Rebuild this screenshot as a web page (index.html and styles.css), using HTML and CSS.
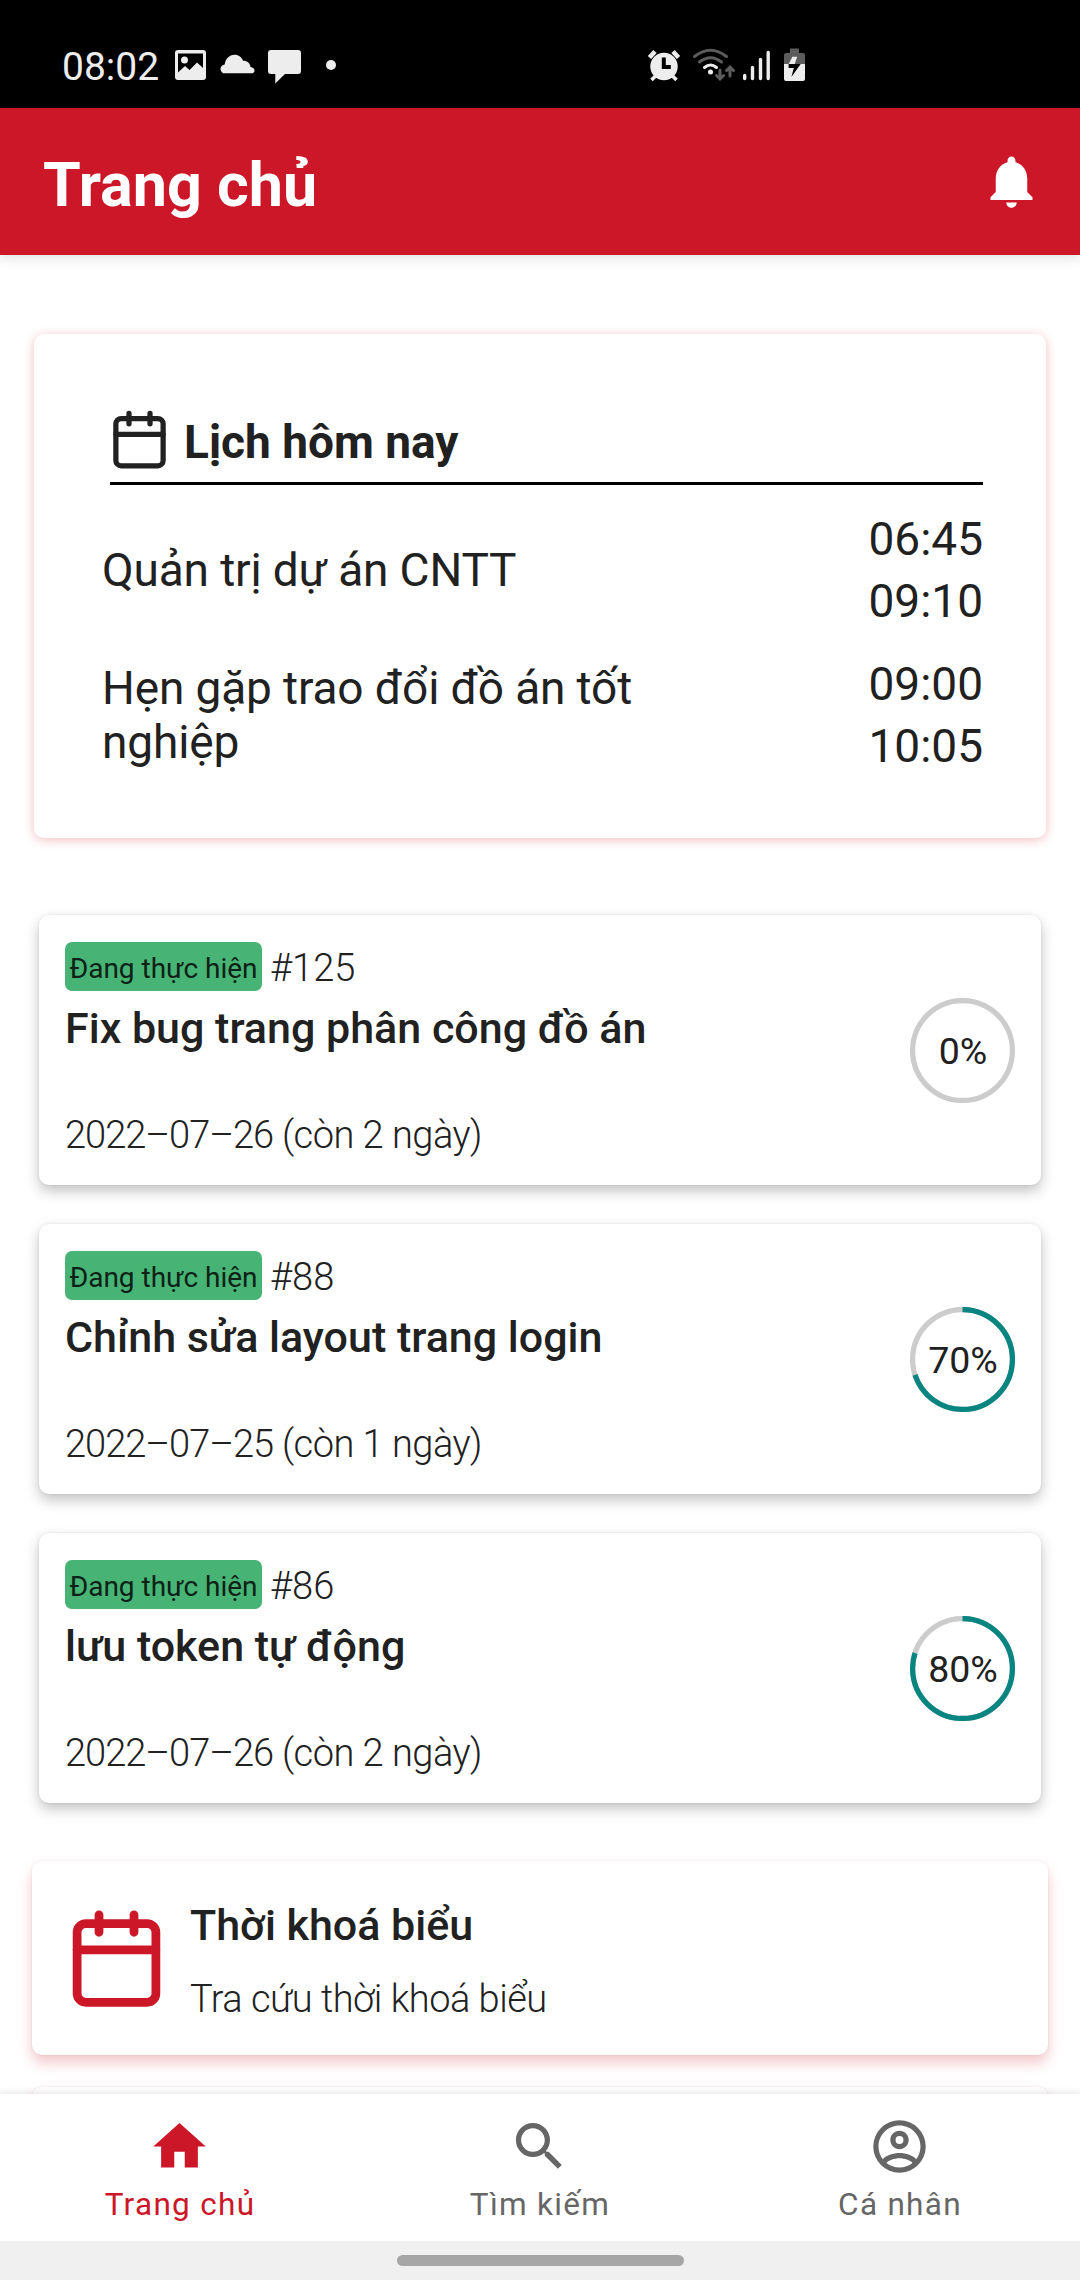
FILE: index.html
```html
<!DOCTYPE html>
<html lang="vi">
<head>
<meta charset="utf-8">
<title>Trang chủ</title>
<link rel="stylesheet" href="styles.css">
</head>
<body>
<svg width="0" height="0" class="defs">
  <symbol id="calendar" viewBox="0 0 24 24"><g fill="none" stroke="currentColor" stroke-width="2" stroke-linecap="round" stroke-linejoin="round"><rect x="3" y="4" width="18" height="18" rx="2"/><path d="M16 2v4M8 2v4M3 10h18"/></g></symbol>
</svg>
<div class="screen">
  <div class="status">
    <span class="clock">08:02</span>
    <svg class="left-icons" width="165" height="40" viewBox="174 48 165 40" fill="#ededed">
      <path fill-rule="evenodd" d="M178 50h25a3 3 0 0 1 3 3v24a3 3 0 0 1-3 3h-25a3 3 0 0 1-3-3V53a3 3 0 0 1 3-3zm0 3.500v19l7-6.500 4.500 4 7.500-7.500 6 5.500V53.500zM184.500 56.500a3.500 3.500 0 1 1 0 7a3.500 3.500 0 0 1 0-7z"/>
      <path d="M225 73.300a4.300 4.300 0 0 1-.3-8.700c.5-5.500 4.500-9.900 9.800-9.900 4.200 0 7.200 2.600 8.600 6 4-.2 7 2.300 7.400 6.300 2.500.3 4 1.600 4 3.400 0 1.800-1.200 2.900-3 2.900z"/>
      <path d="M271 50h27a3 3 0 0 1 3 3v18a3 3 0 0 1-3 3H285l-9.700 9.500V74H271a3 3 0 0 1-3-3V53a3 3 0 0 1 3-3z"/>
      <circle cx="331" cy="65" r="5"/>
    </svg>
    <svg class="right-icons" width="160" height="40" viewBox="646 48 160 40" fill="#ededed">
      <circle cx="664" cy="66.500" r="13.700"/>
      <path d="M649.500 57.500l5.500-6M678.500 57.500l-5.500-6" stroke="#ededed" stroke-width="4.600"/>
      <path d="M651.500 80l5-5M676.500 80l-5-5" stroke="#ededed" stroke-width="3.600"/>
      <path d="M663.800 57.500v9.500h7" fill="none" stroke="#000" stroke-width="4"/>
      <g fill="none" stroke="#5c5c5c" stroke-width="3" stroke-linecap="round"><path d="M694.500 56.500q16-12.500 32 0M699.500 62q11-8.500 22 0"/><path d="M720 70v8M716.500 75.500l3.500 3.500 3.500-3.500M730 76v-8M726.500 70.500l3.500-3.500 3.500 3.500"/></g>
      <path d="M704.500 67.500q6-5 12 0" fill="none" stroke="#ededed" stroke-width="3" stroke-linecap="round"/>
      <circle cx="710.500" cy="72" r="2.500"/>
      <path d="M744.700 75.500v3M752.500 67.500v11M760.500 59.500v19M768.200 52.500v26" stroke="#ededed" stroke-width="3.400" stroke-linecap="round"/>
      <path d="M790 48.500h9v4.500h4a2 2 0 0 1 2 2v9h-21v-9a2 2 0 0 1 2-2h4z" fill="#5c5c5c"/>
      <path d="M784 64h21v15a2 2 0 0 1-2 2h-17a2 2 0 0 1-2-2z"/>
      <path d="M792.400 56.700h4.800l-2.500 7.300h-6z"/>
      <path d="M788.600 64h12.100l-9.300 13 2.400-9h-5.200z" fill="#000"/>
    </svg>
  </div>
  <header class="appbar">
    <h1>Trang chủ</h1>
    <svg width="63" height="63" viewBox="0 0 24 24" fill="#fff"><path d="M12 22c1.100 0 2-.9 2-2h-4c0 1.100.89 2 2 2zm6-6v-5c0-3.070-1.640-5.640-4.500-6.320V4c0-.83-.67-1.500-1.500-1.500s-1.500.67-1.500 1.500v.68C7.630 5.360 6 7.920 6 11v5l-2 2v1h16v-1l-2-2z"/></svg>
  </header>
  <main class="content">
    <section class="agenda">
      <div class="agenda-head">
        <svg width="63" height="63"><use href="#calendar"/></svg>
        <h2>Lịch hôm nay</h2>
      </div>
      <div class="event"><p>Quản trị dự án CNTT</p><div class="times"><span>06:45</span><span>09:10</span></div></div>
      <div class="event"><p>Hẹn gặp trao đổi đồ án tốt nghiệp</p><div class="times"><span>09:00</span><span>10:05</span></div></div>
    </section>
    <section class="tasks">
      <article class="task">
        <div class="task-info">
          <div class="task-top"><span class="badge">Đang thực hiện</span><span class="num">#125</span></div>
          <h3>Fix bug trang phân công đồ án</h3>
          <p class="due"><time>2022–07–26</time> (còn 2 ngày)</p>
        </div>
        <div class="ring"><svg width="105" height="105" viewBox="0 0 105 105"><circle class="track" cx="52.500" cy="52.500" r="49.900"/></svg><span>0%</span></div>
      </article>
      <article class="task">
        <div class="task-info">
          <div class="task-top"><span class="badge">Đang thực hiện</span><span class="num">#88</span></div>
          <h3>Chỉnh sửa layout trang login</h3>
          <p class="due"><time>2022–07–25</time> (còn 1 ngày)</p>
        </div>
        <div class="ring"><svg width="105" height="105" viewBox="0 0 105 105"><circle class="track" cx="52.500" cy="52.500" r="49.900"/><circle class="value" cx="52.500" cy="52.500" r="49.900" pathLength="100" stroke-dasharray="70 100"/></svg><span>70%</span></div>
      </article>
      <article class="task">
        <div class="task-info">
          <div class="task-top"><span class="badge">Đang thực hiện</span><span class="num">#86</span></div>
          <h3>lưu token tự động</h3>
          <p class="due"><time>2022–07–26</time> (còn 2 ngày)</p>
        </div>
        <div class="ring"><svg width="105" height="105" viewBox="0 0 105 105"><circle class="track" cx="52.500" cy="52.500" r="49.900"/><circle class="value" cx="52.500" cy="52.500" r="49.900" pathLength="100" stroke-dasharray="80 100"/></svg><span>80%</span></div>
      </article>
    </section>
    <section class="services">
      <article class="service">
        <svg width="105" height="105"><use href="#calendar"/></svg>
        <div><h3>Thời khoá biểu</h3><p>Tra cứu thời khoá biểu</p></div>
      </article>
      <article class="service"></article>
    </section>
  </main>
  <nav class="tabs">
    <div class="tab active"><svg width="63" height="63" viewBox="0 0 24 24" fill="currentColor"><path d="M10 20v-6h4v6h5v-8h3L12 3 2 12h3v8z"/></svg><span>Trang chủ</span></div>
    <div class="tab"><svg width="63" height="63" viewBox="0 0 24 24" fill="currentColor"><path d="M15.500 14h-.79l-.28-.27C15.410 12.590 16 11.110 16 9.500 16 5.910 13.090 3 9.500 3S3 5.910 3 9.500 5.910 16 9.500 16c1.610 0 3.090-.59 4.230-1.570l.27.28v.79l5 4.990L20.490 19l-4.990-5zm-6 0C7.010 14 5 11.990 5 9.500S7.010 5 9.500 5 14 7.010 14 9.500 11.990 14 9.500 14z"/></svg><span>Tìm kiếm</span></div>
    <div class="tab"><svg width="63" height="63" viewBox="0 0 24 24" fill="currentColor"><path d="M12,2A10,10 0 0,0 2,12A10,10 0 0,0 12,22A10,10 0 0,0 22,12A10,10 0 0,0 12,2M7.070,18.280C7.500,17.380 10.120,16.500 12,16.500C13.880,16.500 16.500,17.380 16.930,18.280C15.570,19.360 13.860,20 12,20C10.140,20 8.430,19.360 7.070,18.280M18.360,16.830C16.930,15.090 13.460,14.500 12,14.500C10.540,14.500 7.070,15.090 5.640,16.830C4.620,15.500 4,13.820 4,12C4,7.590 7.590,4 12,4C16.410,4 20,7.590 20,12C20,13.820 19.380,15.500 18.360,16.830M12,6C10.060,6 8.500,7.560 8.500,9.500C8.500,11.440 10.060,13 12,13C13.940,13 15.500,11.440 15.500,9.500C15.500,7.560 13.940,6 12,6M12,11A1.500,1.500 0 0,1 10.500,9.500A1.500,1.500 0 0,1 12,8A1.500,1.500 0 0,1 13.500,9.500A1.500,1.500 0 0,1 12,11Z"/></svg><span>Cá nhân</span></div>
  </nav>
  <div class="gesture"><i></i></div>
</div>
</body>
</html>
```
FILE: styles.css
```css
* { box-sizing: border-box; margin: 0; padding: 0; }
body { font-family: Roboto, sans-serif; color: #212121; background: #fff; }
svg { display: block; flex: none; }
.defs { position: absolute; }
.screen { width: 1080px; height: 2280px; display: flex; flex-direction: column; overflow: hidden; }

.status { height: 108px; flex: none; background: #000; color: #ededed; display: flex; align-items: flex-start; }
.clock { margin: 44px 0 0 62px; width: 112px; font-size: 39px; line-height: 46px; }
.left-icons { margin-top: 48px; }
.right-icons { margin: 48px 0 0 307px; overflow: visible; }

.appbar { height: 147px; flex: none; background: #cc1728; color: #fff; display: flex; align-items: center; justify-content: space-between; padding: 0 37px 0 43px; box-shadow: 0 3px 12px rgba(0,0,0,.12); z-index: 1; }
.appbar h1 { font-size: 61px; line-height: 70px; font-weight: 700; padding-top: 6px; }

.content { flex: 1; min-height: 0; overflow: hidden; padding: 79px 32px 0; }
.agenda { margin: 0 2px; height: 504px; border-radius: 10px; background: #fff; padding: 70px 63px 0 68px; box-shadow: 0 2px 11px rgba(204,23,40,.28); }
.agenda-head { margin-left: 8px; height: 81px; border-bottom: 3px solid #000; display: flex; align-items: flex-start; }
.agenda-head svg { margin: 4px 0 0 -2px; }
.agenda-head h2 { font-size: 46px; line-height: 54px; font-weight: 700; margin: 11px 0 0 13px; }
.event { display: flex; justify-content: space-between; align-items: center; font-size: 46px; margin-top: 23px; }
.event + .event { margin-top: 21px; }
.event p { width: 570px; line-height: 54px; letter-spacing: -.14px; }
.times { display: flex; flex-direction: column; }
.times span { line-height: 62px; }

.tasks { margin: 77px 7px 0; display: flex; flex-direction: column; gap: 39px; }
.task { height: 270px; border-radius: 10px; background: #fff; display: flex; justify-content: space-between; align-items: center; padding: 0 26px; box-shadow: 0 6px 14px rgba(0,0,0,.24), 0 0 3px rgba(0,0,0,.08); }
.task-info { height: 270px; padding-top: 27px; }
.task-top { display: flex; align-items: center; gap: 8px; }
.badge { width: 197px; height: 49px; border-radius: 7px; background: #47b475; color: #0d2116; font-size: 28px; line-height: 53px; text-align: center; white-space: nowrap; }
.num, .due { font-size: 38px; font-weight: 300; line-height: 44px; }
.num { padding-top: 2px; }
.task h3 { font-size: 43px; line-height: 50px; font-weight: 500; margin-top: 12px; }
.due { margin-top: 60px; letter-spacing: -.5px; }
.due time { letter-spacing: -1px; word-spacing: 0; }
.ring { display: grid; place-items: center; font-size: 37.500px; }
.ring > * { grid-area: 1 / 1; }
.ring span { padding: 2px 0 0 1px; }
.ring circle { fill: none; stroke-width: 5.250; }
.ring svg { transform: rotate(-90deg); }
.track { stroke: #ccc; }
.value { stroke: #088581; }

.services { margin-top: 58px; display: flex; flex-direction: column; gap: 32px; }
.service { height: 194px; border-radius: 10px; background: #fff; padding: 0 32px; display: flex; align-items: center; gap: 21px; box-shadow: 0 8px 14px rgba(204,23,40,.24), 0 0 3px rgba(0,0,0,.08); }
.service svg { color: #cc1728; }
.service h3 { font-size: 43px; line-height: 50px; font-weight: 500; padding-top: 4px; height: 54px; }
.service p { font-size: 38px; font-weight: 300; line-height: 44px; margin-top: 27px; letter-spacing: -.5px; }

.tabs { height: 147px; flex: none; background: #fff; display: grid; grid-template-columns: repeat(3, 1fr); box-shadow: 0 0 8px rgba(0,0,0,.14); z-index: 1; color: #666; }
.tab { display: flex; flex-direction: column; align-items: center; padding-top: 21px; }
.tab svg { margin-right: 2px; }
.tab span { font-size: 31.500px; line-height: 37px; letter-spacing: 1.300px; margin-top: 8px; }
.active { color: #cc1728; }
.gesture { height: 39px; flex: none; background: #f0f0f0; display: flex; justify-content: center; padding-top: 14px; z-index: 2; }
.gesture i { width: 287px; height: 11px; border-radius: 6px; background: #a6a6a6; }
```
